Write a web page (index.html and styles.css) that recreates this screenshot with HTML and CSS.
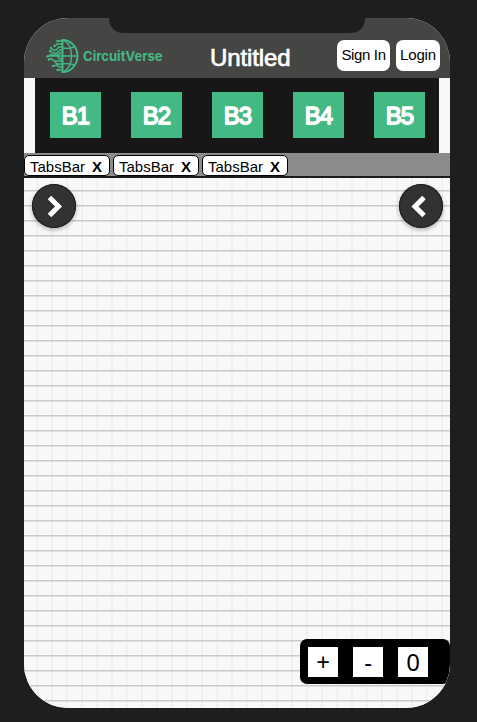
FILE: index.html
```html
<!DOCTYPE html>
<html lang="en">
<head>
<meta charset="utf-8">
<title>CircuitVerse</title>
<link rel="stylesheet" href="styles.css">
</head>
<body>
<main class="screen">
  <div class="notch"></div>
  <header class="header">
    <div class="brand">
      <svg class="logo" width="34" height="34" viewBox="0 0 34 34" fill="none" stroke="currentColor" stroke-width="1.4">
        <path stroke-width="1.900" d="M16.500 1A15 16 0 0 1 16.500 33Z"/>
        <path d="M18 1.500C28 7 28 27 18 32.500M16.500 9Q23 10 28 8M16.500 17H32M16.500 25Q23 24 28 26"/>
        <path d="M16 2H12M16 5H11L9 7M16 8H13L10 11H7L5 9M16 11H14L11 14H7L4 12M16 14H14L12 16H5M16 17H1M16 20H14L12 18M16 22H8L6 20H3M16 25H11L9 23M16 28H13L11 26L7 27M16 31H12"/>
        <g fill="currentColor" stroke="none"><circle cx="11.500" cy="2" r="1.200"/><circle cx="8.500" cy="7" r="1.200"/><circle cx="5" cy="9" r="1.200"/><circle cx="4" cy="12" r="1.200"/><circle cx="4.500" cy="16" r="1.200"/><circle cx="1.500" cy="17.500" r="1.200"/><circle cx="3" cy="20.500" r="1.200"/><circle cx="7" cy="27" r="1.200"/><circle cx="11.500" cy="31" r="1.200"/></g>
      </svg>
      <span class="brand-name">CircuitVerse</span>
    </div>
    <h1 class="title">Untitled</h1>
    <nav class="account">
      <button class="sign-in">Sign In</button>
      <button class="login">Login</button>
    </nav>
  </header>
  <div class="toolbar">
    <button>B1</button><button>B2</button><button>B3</button><button>B4</button><button>B5</button>
  </div>
  <div class="tabs">
    <div class="tab"><span>TabsBar</span><b>X</b></div>
    <div class="tab"><span>TabsBar</span><b>X</b></div>
    <div class="tab"><span>TabsBar</span><b>X</b></div>
  </div>
  <section class="canvas">
    <div class="panel-toggles">
      <button class="toggle"><svg width="44" height="44" viewBox="0 0 44 44"><path d="M17.500 13.500L26.500 22.500L17.500 31.500"/></svg></button>
      <button class="toggle"><svg width="44" height="44" viewBox="0 0 44 44"><path d="M25 13.500L16 22.500L25 31.500"/></svg></button>
    </div>
    <div class="zoom">
      <button>+</button><button>-</button><button>0</button>
    </div>
  </section>
</main>
</body>
</html>
```
FILE: styles.css
```css
* { box-sizing: border-box; }
body {
  margin: 0;
  height: 722px;
  padding: 18px 27px 14px 24px;
  background: #1e1e1e;
  font-family: "Liberation Sans", Arial, sans-serif;
  overflow: hidden;
}
button { border: 0; padding: 0; margin: 0; font-family: inherit; color: #000; }
.screen {
  position: relative;
  display: flex;
  flex-direction: column;
  width: 426px;
  height: 690px;
  border-radius: 44px;
  overflow: hidden;
  background: #f8f8f8;
}
.notch {
  position: absolute;
  top: 0;
  left: 85px;
  width: 256px;
  height: 15px;
  border-radius: 0 0 14px 14px;
  background: #1e1e1e;
}
.header {
  display: grid;
  grid-template-columns: 186px 127px 1fr;
  height: 60px;
  flex: none;
  padding-top: 15px;
  background: #454543;
}
.brand {
  display: flex;
  align-items: center;
  gap: 3px;
  padding-left: 22px;
  color: #43b984;
}
.logo { flex: none; }
.brand-name {
  font: 700 13px Inter, sans-serif;
  letter-spacing: .05px;
  white-space: nowrap;
}
.title {
  margin: 0;
  padding-top: 10px;
  font-size: 24px;
  line-height: 30px;
  font-weight: 400;
  color: #fff;
  -webkit-text-stroke: .7px #fff;
  letter-spacing: -.1px;
  white-space: nowrap;
}
.account { display: flex; gap: 6px; padding-top: 7px; }
.account button {
  height: 31px;
  padding-bottom: 2px;
  border-radius: 7px;
  background: #fff;
  font-size: 15px;
  letter-spacing: -.35px;
  white-space: nowrap;
}
.sign-in { width: 53px; }
.account .login { width: 44px; letter-spacing: -.1px; }
.toolbar {
  display: flex;
  gap: 30px;
  height: 75px;
  flex: none;
  margin: 0 11px;
  padding: 14px 0 14px 15px;
  background: #171717;
}
.toolbar button {
  flex: none;
  width: 51px;
  height: 46px;
  padding-top: 1px;
  background: #43b984;
  color: #fff;
  font-size: 24px;
  font-weight: 400;
  letter-spacing: -1px;
  -webkit-text-stroke: 1.4px #fff;
  text-shadow: 0 1px 1px #e4e4e4;
}
.tabs {
  display: flex;
  gap: 3px;
  height: 25px;
  flex: none;
  padding-top: 2px;
  background: #8b8b8b;
  border-bottom: 2px solid #1b1b1b;
}
.tab {
  display: flex;
  justify-content: space-between;
  width: 86px;
  height: 21px;
  padding: 2px 7px 0 5px;
  border: 1px solid #000;
  border-radius: 5px;
  background: #fff;
  font-size: 15px;
  line-height: 18px;
}
.canvas {
  flex: 1;
  display: flex;
  flex-direction: column;
  justify-content: space-between;
  padding: 6px 0 24px;
  background-color: #f8f8f8;
  background-image:
    linear-gradient(#c9c9c9 1px, #e0e0e0 1px 2px, transparent 2px),
    linear-gradient(90deg, #f0f0f0 2px, transparent 2px);
  background-size: 15px 15px;
  background-position: 0 12px, 12px 0;
}
.panel-toggles { display: flex; justify-content: space-between; padding: 0 7px 0 8px; }
.toggle {
  width: 44px;
  height: 44px;
  border-radius: 50%;
  background: #323232;
  box-shadow: inset 0 0 0 1px #17201c, 0 2px 4px rgba(0, 0, 0, .3);
}
.toggle svg { display: block; fill: none; stroke: #fff; stroke-width: 5; }
.zoom {
  display: flex;
  gap: 15px;
  align-self: flex-end;
  width: 150px;
  height: 45px;
  padding: 8px;
  border-radius: 7px;
  background: #000;
}
.zoom button {
  width: 30px;
  height: 30px;
  background: #fff;
  font: 24px/30px "Noto Sans", sans-serif;
}
```
